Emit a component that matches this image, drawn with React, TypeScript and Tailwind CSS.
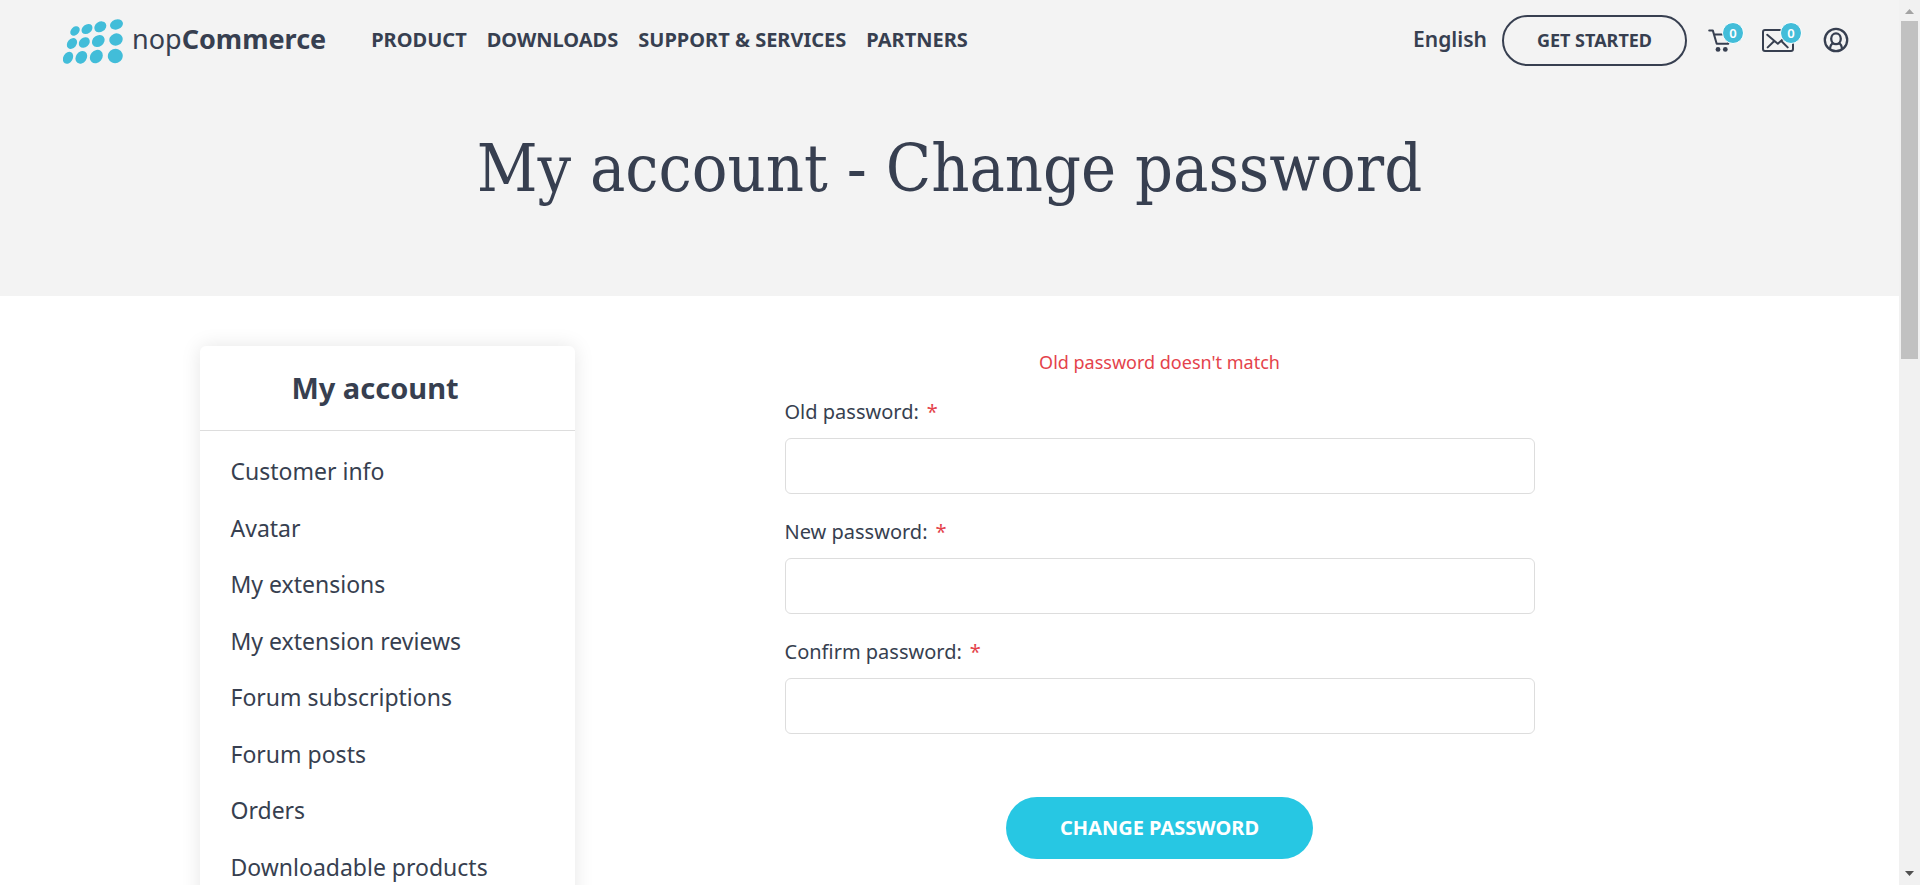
import { useId } from "react";

const navItems = ["PRODUCT", "DOWNLOADS", "SUPPORT & SERVICES", "PARTNERS"];

const accountLinks = [
  "Customer info",
  "Avatar",
  "My extensions",
  "My extension reviews",
  "Forum subscriptions",
  "Forum posts",
  "Orders",
  "Downloadable products",
];

const fields = ["Old password:", "New password:", "Confirm password:"];

// cx, cy, long radius, short radius, tilt
const logoDots: [number, number, number, number, number][] = [
  [12, 12, 5.4, 4, -45],
  [24, 10, 6, 4.5, -38],
  [37.3, 7.8, 6.4, 5, -32],
  [53.5, 5.4, 6.6, 5, -20],
  [9, 24.5, 6, 4.5, -50],
  [21.3, 23.5, 6, 4.8, -42],
  [35.3, 22, 6.8, 5.5, -36],
  [53, 20.5, 6.8, 6, -22],
  [5, 38.8, 6.4, 4.7, -60],
  [18.3, 38.3, 6.8, 5.4, -55],
  [33.3, 37.6, 7.2, 6, -50],
  [52.3, 37, 7.5, 7.2, -20],
];

function Logo() {
  return (
    <a href="#home" className="flex items-center gap-[9px]">
      <svg viewBox="0 0 60 46" className="mt-1 h-[46px] w-[60px] fill-[#42bdd9]" aria-hidden="true">
        {logoDots.map(([cx, cy, rx, ry, a]) => (
          <ellipse key={`${cx}-${cy}`} cx={cx} cy={cy} rx={rx} ry={ry} transform={`rotate(${a} ${cx} ${cy})`} />
        ))}
      </svg>
      <span className="-mt-1 text-[27px] leading-none">
        <span>nop</span>
        <span className="font-bold">Commerce</span>
      </span>
    </a>
  );
}

function Badge({ className }: { className: string }) {
  return (
    <span className={`absolute -top-[6px] flex size-[22px] items-center justify-center rounded-full border border-white bg-[#42bdd9] text-[13px] leading-none font-semibold text-white ${className}`}>
      0
    </span>
  );
}

function CartIcon() {
  return (
    <svg viewBox="0 0 24 24" className="size-6" fill="none" stroke="currentColor" strokeWidth="2" strokeLinecap="round" strokeLinejoin="round" aria-hidden="true">
      <path d="M1.200 2.400h3.600l3.900 13.400h11.500M6.200 6.600h16.500l-2.500 9.200" />
      <circle cx="10" cy="21.400" r="2.400" fill="currentColor" stroke="none" />
      <circle cx="17.300" cy="21.400" r="2.400" fill="currentColor" stroke="none" />
    </svg>
  );
}

function MailIcon() {
  return (
    <svg viewBox="0 0 32 24" className="h-6 w-8" fill="none" stroke="currentColor" strokeWidth="2" strokeLinecap="round" strokeLinejoin="round" aria-hidden="true">
      <rect x="1" y="2" width="30" height="21" rx="2" />
      <path d="M5.200 6.800l10.600 9 10.200-9M5.700 19.400l5.800-5.600M19.300 13l6.400 6.400" />
    </svg>
  );
}

function UserIcon() {
  return (
    <svg viewBox="0 0 26 26" className="size-[26px]" fill="none" stroke="currentColor" strokeWidth="2.300" aria-hidden="true">
      <circle cx="13" cy="13" r="11.200" />
      <ellipse cx="13" cy="11.800" rx="4.800" ry="5.400" />
      <path d="M7 22c.2-3.500 1.200-5.200 3.400-6M19 22c-.2-3.500-1.200-5.200-3.400-6" />
    </svg>
  );
}

function Field({ label }: { label: string }) {
  const id = useId();
  return (
    <div>
      <div className="flex gap-2 text-[20px] leading-8">
        <label htmlFor={id}>{label}</label>
        <span className="text-[#e4434b]">*</span>
      </div>
      <input
        id={id}
        type="password"
        className="mt-[10px] block h-14 w-full rounded-md border border-[#dddddd] bg-white px-4 text-[20px] outline-none"
      />
    </div>
  );
}

function Scrollbar() {
  return (
    <div aria-hidden="true" className="flex w-[21px] shrink-0 flex-col items-center justify-between bg-[#f1f1f1]">
      <div className="flex w-full flex-col items-center">
        <svg viewBox="0 0 9 5" className="mt-[9px] mb-[7px] h-[5px] w-[9px] fill-[#a3a3a3]"><path d="M0 5L4.500 0L9 5z" /></svg>
        <div className="h-[338px] w-[17px] bg-[#c1c1c1]" />
      </div>
      <svg viewBox="0 0 9 5" className="mb-[9px] h-[5px] w-[9px] fill-[#505050]"><path d="M0 0L4.500 5L9 0z" /></svg>
    </div>
  );
}

export default function App() {
  return (
    <div className="flex h-screen overflow-hidden bg-white font-['Noto_Sans','Open_Sans',sans-serif] text-[#373f50]">
      <div className="min-w-0 grow">
        <header className="flex h-20 items-center justify-between bg-[#f3f3f3] pr-[50px] pl-[63px]">
          <div className="flex items-center gap-[45px]">
            <Logo />
            <nav className="flex gap-5 text-[20px] font-bold">
              {navItems.map((item) => (
                <a key={item} href="#nav" className="whitespace-nowrap">{item}</a>
              ))}
            </nav>
          </div>
          <div className="flex items-center">
            <button className="text-[21px] font-semibold">English</button>
            <a href="#start" className="ml-[15px] flex h-[51px] w-[185px] items-center justify-center rounded-full border-2 border-[#373f50] text-[18px] font-bold">
              GET STARTED
            </a>
            <a href="#cart" aria-label="Shopping cart" className="relative ml-[21px]"><CartIcon /><Badge className="-right-[12px]" /></a>
            <a href="#inbox" aria-label="Inbox" className="relative ml-[30px]"><MailIcon /><Badge className="-right-[8px]" /></a>
            <a href="#account" aria-label="Account" className="ml-[29px]"><UserIcon /></a>
          </div>
        </header>
        <div className="h-[216px] bg-[#f3f3f3] pt-[49px]">
          <h1 className="text-center font-['DejaVu_Serif_Condensed','DejaVu_Serif',serif] text-[66px] leading-[80px]">
            My account - Change password
          </h1>
        </div>
        <div className="mx-auto flex max-w-[1500px] items-start justify-between pt-[50px]">
          <aside className="w-1/4 rounded-md pb-10 shadow-[0_0_20px_rgba(0,0,0,0.1)]">
            <h2 className="border-b border-[#dddddd] pt-[21px] pr-6 pb-[22px] text-center text-[29px] leading-[41px] font-bold">My account</h2>
            <ul className="mt-3 grid h-[452px] auto-rows-fr pl-[31px]">
              {accountLinks.map((link) => (
                <li key={link} className="flex items-center text-[23px]">
                  <a href="#section">{link}</a>
                </li>
              ))}
            </ul>
          </aside>
          <main className="flex w-[72%] justify-center">
            <form className="w-[750px]" onSubmit={(e) => e.preventDefault()}>
              <p className="text-center text-[18px] leading-8 text-[#e4434b]">Old password doesn't match</p>
              <div className="mt-[18px] flex flex-col gap-[22px]">
                {fields.map((label) => (
                  <Field key={label} label={label} />
                ))}
              </div>
              <button className="mx-auto mt-[63px] block h-[62px] w-[307px] rounded-full bg-[#27c7e3] text-[20px] font-bold text-white">
                CHANGE PASSWORD
              </button>
            </form>
          </main>
        </div>
      </div>
      <Scrollbar />
    </div>
  );
}
